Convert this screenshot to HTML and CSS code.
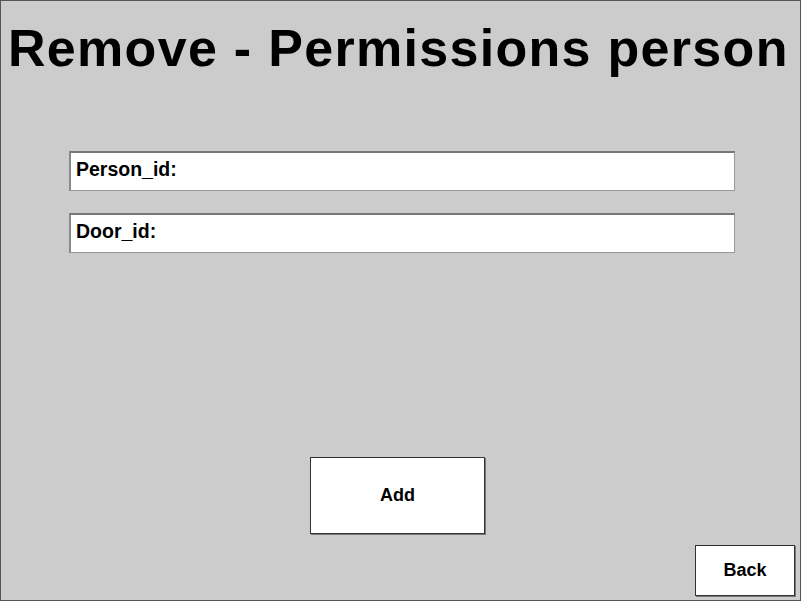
FILE: index.html
```html
<!DOCTYPE html>
<html>
<head>
<meta charset="utf-8">
<link rel="stylesheet" href="styles.css">
</head>
<body>
<div class="frame">
  <h1 class="title">Remove - Permissions person</h1>
  <div class="fields">
    <div class="field">Person_id:</div>
    <div class="field">Door_id:</div>
  </div>
  <div class="actions">
    <div class="btn btn-add">Add</div>
  </div>
  <div class="footer">
    <div class="btn btn-back">Back</div>
  </div>
</div>
</body>
</html>
```
FILE: styles.css
```css
html, body {
  margin: 0;
  padding: 0;
  background: #ffffff;
}
.frame {
  box-sizing: border-box;
  width: 801px;
  height: 601px;
  background: #cccccc;
  border: 1px solid #555555;
  display: flex;
  flex-direction: column;
  font-family: "Liberation Sans", Arial, sans-serif;
  color: #000;
}
.title {
  margin: 17px 0 0 0;
  padding-left: 7px;
  font-size: 52px;
  font-weight: bold;
  line-height: 60px;
  letter-spacing: 1.3px;
  text-align: left;
  white-space: nowrap;
}
.fields {
  margin: 73px 0 0 68px;
  display: flex;
  flex-direction: column;
  gap: 22px;
}
.field {
  box-sizing: border-box;
  width: 666px;
  height: 40px;
  background: #ffffff;
  border-style: solid;
  border-width: 2px 1px 1px 2px;
  border-color: #777777 #999999 #999999 #888888;
  padding: 5px 0 0 5px;
  font-size: 19.5px;
  font-weight: bold;
  line-height: 22px;
}
.actions {
  margin-top: 204px;
  display: flex;
  justify-content: center;
  padding-right: 6px;
}
.btn {
  box-sizing: border-box;
  background: #ffffff;
  border: 1px solid #333333;
  box-shadow: 1px 1px 0 #777777;
  display: flex;
  align-items: center;
  justify-content: center;
  font-weight: bold;
  font-size: 18px;
}
.btn-add {
  width: 175px;
  height: 77px;
}
.footer {
  margin-top: 11px;
  display: flex;
  justify-content: flex-end;
  padding-right: 5px;
}
.btn-back {
  width: 100px;
  height: 51px;
}
```
